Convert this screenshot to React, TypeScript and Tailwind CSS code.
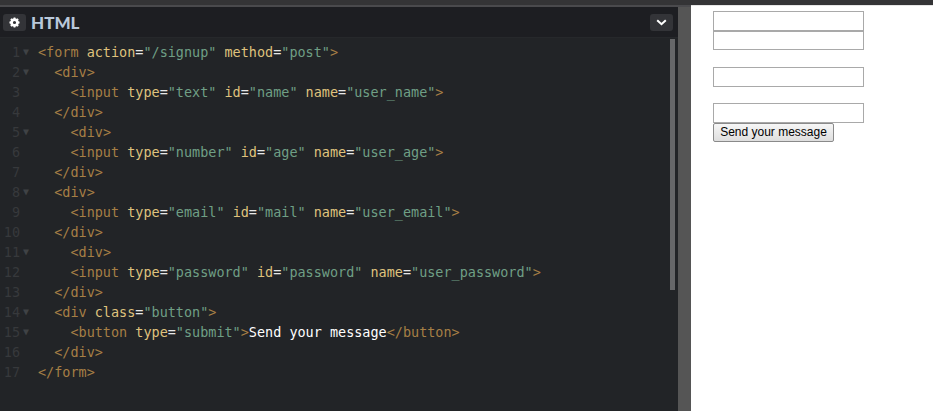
import { Fragment } from "react";

type Token = [string, string];

const tag = "text-[#a67f45]";
const attr = "text-[#dfc27d]";
const eq = "text-[#e8e8e8]";
const str = "text-[#6f9f85]";
const plain = "text-white";

function el(indent: number, name: string, attrs: [string, string][]): Token[] {
  const out: Token[] = [[" ".repeat(indent), plain], ["<" + name, tag]];
  attrs.forEach(([k, v]) => {
    out.push([" ", plain], [k, attr], ["=", eq], ['"' + v + '"', str]);
  });
  out.push([">", tag]);
  return out;
}

const close = (indent: number, name: string): Token[] => [
  [" ".repeat(indent), plain],
  ["</" + name + ">", tag],
];

const lines: { tokens: Token[]; fold?: boolean }[] = [
  { tokens: el(0, "form", [["action", "/signup"], ["method", "post"]]), fold: true },
  { tokens: el(2, "div", []), fold: true },
  { tokens: el(4, "input", [["type", "text"], ["id", "name"], ["name", "user_name"]]) },
  { tokens: close(2, "div") },
  { tokens: el(4, "div", []), fold: true },
  { tokens: el(4, "input", [["type", "number"], ["id", "age"], ["name", "user_age"]]) },
  { tokens: close(2, "div") },
  { tokens: el(2, "div", []), fold: true },
  { tokens: el(4, "input", [["type", "email"], ["id", "mail"], ["name", "user_email"]]) },
  { tokens: close(2, "div") },
  { tokens: el(4, "div", []), fold: true },
  { tokens: el(4, "input", [["type", "password"], ["id", "password"], ["name", "user_password"]]) },
  { tokens: close(2, "div") },
  { tokens: el(2, "div", [["class", "button"]]), fold: true },
  {
    tokens: [
      ...el(4, "button", [["type", "submit"]]),
      ["Send your message", plain],
      ["</button>", tag],
    ],
    fold: true,
  },
  { tokens: close(2, "div") },
  { tokens: close(0, "form") },
];

function Gear() {
  return (
    <svg width="11" height="11" viewBox="0 0 24 24" fill="none">
      <circle cx="12" cy="12" r="6.5" stroke="#fff" strokeWidth="6" />
      <path
        d="M12 1v5M12 18v5M1 12h5M18 12h5M4.2 4.2l3.5 3.5M16.3 16.3l3.5 3.5M4.2 19.8l3.5-3.5M16.3 7.7l3.5-3.5"
        stroke="#fff"
        strokeWidth="4"
      />
    </svg>
  );
}

export default function App() {
  return (
    <div className="flex flex-col h-[411px] w-[933px] overflow-hidden bg-white">
      <div className="h-[5px] bg-[#343436] shrink-0" />
      <div className="flex flex-1 min-h-0">
        <div className="w-[678px] flex flex-col bg-[#222427] border-t-2 border-[#4a4a4d]">
          <header className="h-[31px] shrink-0 flex items-center justify-between pl-[3px] pr-[5px] pt-[1px] bg-[#1d1e22] border-b border-[#26282b]">
            <div className="flex items-center gap-[5px]">
              <button className="w-[23px] h-[17px] rounded-[3px] bg-[#333438] flex items-center justify-center">
                <Gear />
              </button>
              <h2 className="font-['Lato',sans-serif] font-black text-[17px] leading-none text-[#b9c8da]">HTML</h2>
            </div>
            <button className="w-[23px] h-[17px] rounded-[3px] bg-[#333438] flex items-center justify-center">
              <svg width="11" height="7" viewBox="0 0 11 7" fill="none">
                <path d="M1.2 1.2 5.5 5.2 9.8 1.2" stroke="#fff" strokeWidth="2" />
              </svg>
            </button>
          </header>
          <div className="relative flex-1 min-h-0 pt-[4px] font-['DejaVu_Sans_Mono',monospace] text-[13.47px] leading-[20px]">
            {lines.map((line, i) => (
              <div key={i} className="flex h-[20px]">
                <span className="w-[20px] text-right text-[#37393c] shrink-0">{i + 1}</span>
                <span className="w-[18px] shrink-0 text-[#3f4245] text-[10px] pl-[3px]">{line.fold ? "▼" : ""}</span>
                <pre className="font-['DejaVu_Sans_Mono',monospace] text-[13.47px] leading-[20px]">
                  {line.tokens.map(([text, color], j) => (
                    <Fragment key={j}>
                      <span className={color}>{text}</span>
                    </Fragment>
                  ))}
                </pre>
              </div>
            ))}
            <div className="absolute right-[3px] top-[1px] w-[5px] h-[251px] bg-[#666769]" />
          </div>
        </div>
        <div className="w-[13px] bg-[#555555] border-t-2 border-[#4a4a4d]" />
        <div className="flex-1 border-t border-[#e6e6e6] pl-[22px] pt-[5px] font-['Liberation_Sans',sans-serif]">
          <form className="flex flex-col items-start">
            <input type="text" className="block w-[151px] h-[20px] border border-[#a9a9a9] bg-white" />
            <input type="number" className="block w-[151px] h-[19px] border border-[#a9a9a9] bg-white" />
            <input type="email" className="block w-[151px] h-[20px] mt-[17px] border border-[#a9a9a9] bg-white" />
            <input type="password" className="block w-[151px] h-[20px] mt-[16px] border border-[#a9a9a9] bg-white" />
            <button
              type="button"
              className="block w-[121px] h-[19px] pb-[2px] border border-[#8a8a8a] rounded-[2px] bg-linear-to-b from-[#f6f6f6] to-[#dedede] text-[12px] leading-none text-black"
            >
              Send your message
            </button>
          </form>
        </div>
      </div>
    </div>
  );
}
